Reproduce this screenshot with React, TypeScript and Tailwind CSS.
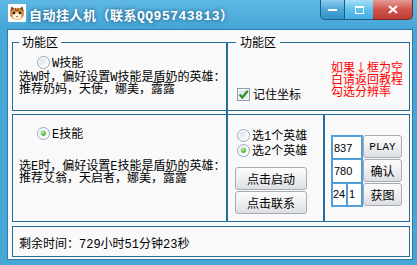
import type { ReactNode } from "react"

const BASE = "font-['Liberation_Mono','Noto_Sans_CJK_SC',monospace]"
const CJK = "font-['Noto_Sans_CJK_SC',sans-serif]"
const LINE = "border-[#236e9a]"

function AppIcon() {
  return (
    <svg width="18" height="18" viewBox="0 0 18 18" className="ml-[8px] mt-[4px] shrink-0">
      <rect x="0" y="0" width="18" height="18" rx="1" fill="#ffffff" />
      <path d="M2 8 L3.5 2.5 L7 5 Z" fill="#6b4a2a" />
      <path d="M16 8 L14.5 2.5 L11 5 Z" fill="#6b4a2a" />
      <ellipse cx="9" cy="10" rx="7" ry="6" fill="#d98a35" />
      <ellipse cx="9" cy="12" rx="4.5" ry="3.5" fill="#fff1d8" />
      <circle cx="6" cy="9" r="1.3" fill="#222" />
      <circle cx="12" cy="9" r="1.3" fill="#222" />
      <path d="M8 12 h2 l-1 1.2 z" fill="#5a2a10" />
      <path d="M7.5 4.5 L8.2 7 M10.5 4.5 L9.8 7" stroke="#5a2a10" strokeWidth="1" />
    </svg>
  )
}

function Radio({ checked = false }: { checked?: boolean }) {
  return (
    <svg width="13" height="13" viewBox="0 0 13 13" className="shrink-0">
      <defs>
        <linearGradient id="radioFill" x1="0" y1="0" x2="1" y2="1">
          <stop offset="0" stopColor="#d9dde3" />
          <stop offset="1" stopColor="#ffffff" />
        </linearGradient>
        <radialGradient id="radioDot" cx="0.4" cy="0.35" r="0.7">
          <stop offset="0" stopColor="#b5f58a" />
          <stop offset="1" stopColor="#23a012" />
        </radialGradient>
      </defs>
      <circle cx="6.5" cy="6.5" r="6" fill="#ffffff" stroke="#92a6be" />
      <circle cx="6.5" cy="6.5" r="4.3" fill="url(#radioFill)" />
      {checked && <circle cx="6.5" cy="6.5" r="2.4" fill="url(#radioDot)" />}
    </svg>
  )
}

function CheckBox() {
  return (
    <svg width="13" height="13" viewBox="0 0 13 13" className="shrink-0">
      <rect x="0.5" y="0.5" width="12" height="12" fill="#f3f4f6" stroke="#8e9cad" />
      <rect x="2.5" y="2.5" width="8" height="8" fill="#e3e7ec" />
      <path d="M2.5 6.5 L5.3 9.5 L10.8 2.8" stroke="#2c9420" strokeWidth="2.2" fill="none" />
    </svg>
  )
}

function RadioRow({ checked = false, label }: { checked?: boolean; label: string }) {
  return (
    <div className="flex items-start gap-[2px]">
      <Radio checked={checked} />
      <span className="mt-[2px]">{label}</span>
    </div>
  )
}

function Btn({ children, className = "" }: { children: ReactNode; className?: string }) {
  return (
    <button
      className={`flex items-center justify-center rounded-[3px] border border-[#a7abb2] bg-linear-to-b from-[#fcfcfc] via-[#efeff1] to-[#dcdee3] text-black ${className}`}
    >
      {children}
    </button>
  )
}

export default function App() {
  return (
    <div className={`flex h-[265px] w-[417px] flex-col bg-[#45a6d7] text-[12px] leading-[12px] text-black ${BASE}`}>
      {/* title bar */}
      <div className="flex h-[29px] shrink-0 items-start bg-linear-to-b from-[#5fb8e4] to-[#44a5d6]">
        <AppIcon />
        <span className="ml-[3px] mt-[10px] text-[13px] font-bold leading-[14px] tracking-[0.5px] text-white [text-shadow:0_0_4px_#134a6e]">
          自动挂人机（联系QQ95743813）
        </span>
        <div className="ml-auto mr-[4px] flex">
          <div className="flex h-[20px] w-[25px] items-center justify-center rounded-bl-[5px] border border-t-0 border-[#1f5a82] bg-linear-to-b from-[#8fcdee] via-[#4aa6d8] to-[#3592c8]">
            <div className="h-[2px] w-[9px] bg-white" />
          </div>
          <div className="flex h-[20px] w-[28px] items-center justify-center border-b border-[#1f5a82] bg-linear-to-b from-[#a5def7] via-[#5ec1ec] to-[#45aee3]">
            <div className="h-[8px] w-[9px] border border-t-2 border-white" />
          </div>
          <div className="flex h-[20px] w-[40px] items-center justify-center rounded-br-[5px] border border-l-0 border-t-0 border-[#7a2424] bg-linear-to-b from-[#e59a94] via-[#cf544c] to-[#bd3b35]">
            <svg width="10" height="9" viewBox="0 0 10 9">
              <path d="M1 1 L9 8 M9 1 L1 8" stroke="#ffffff" strokeWidth="2.2" />
            </svg>
          </div>
        </div>
      </div>

      {/* client area */}
      <div className="ml-[7px] mr-[4px] flex h-[231px] flex-col border border-[#2f7aa8] bg-[#f9f9f9] pl-[4px] pr-[2px] pt-[6px]">
        {/* row 1 */}
        <div className="flex h-[75px]">
          <fieldset className={`h-[75px] w-[215px] border ${LINE}`}>
            <legend className={`ml-[6px] px-[3px] leading-[12px] ${CJK}`}>功能区</legend>
            <div className="mt-[8px] pl-[24px]">
              <RadioRow label="W技能" />
            </div>
            <div className="mt-[2px] pl-[6px] whitespace-nowrap">
              <div>选W时，偏好设置W技能是盾奶的英雄：</div>
              <div>推荐奶妈，天使，娜美，露露</div>
            </div>
          </fieldset>
          <fieldset className={`h-[75px] w-[183px] border ${LINE}`}>
            <legend className={`ml-[8px] px-[4px] leading-[12px] ${CJK}`}>功能区</legend>
            <div className="flex items-start pl-[9px] pr-[6px]">
              <div className={`mt-[40px] flex items-start gap-[3px] ${CJK}`}>
                <CheckBox />
                <span>记住坐标</span>
              </div>
              <div className={`ml-auto mt-[13px] text-[#ff0000] ${CJK}`}>
                <div>如果↓框为空</div>
                <div>白请返回教程</div>
                <div>勾选分辨率</div>
              </div>
            </div>
          </fieldset>
        </div>

        {/* gap between rows, crossed by the divider */}
        <div className="flex h-[3px]">
          <div className="ml-[214px] w-[2px] bg-[#236e9a]" />
        </div>

        {/* row 2 */}
        <div className="flex h-[108px]">
          <div className={`w-[215px] border ${LINE}`}>
            <div className="mt-[12px] pl-[24px]">
              <RadioRow checked label="E技能" />
            </div>
            <div className="mt-[20px] pl-[6px] whitespace-nowrap">
              <div>选E时，偏好设置E技能是盾奶的英雄：</div>
              <div>推荐艾翁，天启者，娜美，露露</div>
            </div>
          </div>

          <div className={`w-[97px] border ${LINE}`}>
            <div className="mt-[14px] flex flex-col gap-[1px] pl-[9px]">
              <RadioRow label="选1个英雄" />
              <RadioRow checked label="选2个英雄" />
            </div>
            <div className={`mt-[9px] flex flex-col gap-[1px] pl-[7px] ${CJK}`}>
              <Btn className="h-[23px] w-[72px]">点击启动</Btn>
              <Btn className="h-[23px] w-[72px]">点击联系</Btn>
            </div>
          </div>

          <div className={`w-[86px] border ${LINE}`}>
            <div className="mt-[20px] flex pl-[6px]">
              <div className="grid h-[72px] w-[32px] grid-cols-2 grid-rows-3 gap-[2px] bg-[#519fd6] p-[2px] font-['Liberation_Sans',sans-serif] text-[11px]">
                <div className="col-span-2 flex items-center bg-white pl-[1px]">837</div>
                <div className="col-span-2 flex items-center bg-white pl-[1px]">780</div>
                <div className="flex items-center bg-white">24</div>
                <div className="flex items-center bg-white pl-[1px]">1</div>
              </div>
              <div className="flex flex-col gap-[1px]">
                <Btn className="h-[23px] w-[39px] text-[11px]">PLAY</Btn>
                <Btn className={`h-[23px] w-[39px] ${CJK}`}>确认</Btn>
                <Btn className={`h-[23px] w-[39px] ${CJK}`}>获图</Btn>
              </div>
            </div>
          </div>
        </div>

        {/* row 3 */}
        <div className={`mt-[4px] h-[31px] border ${LINE} pl-[6px] pt-[12px]`}>
          剩余时间：729小时51分钟23秒
        </div>
      </div>
    </div>
  )
}
